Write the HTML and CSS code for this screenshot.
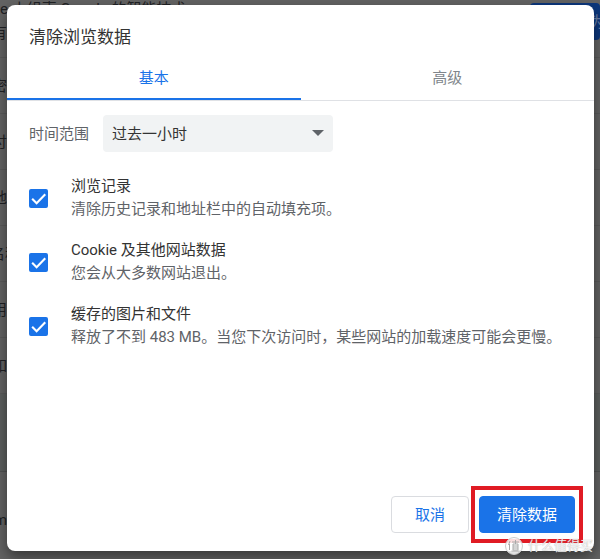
FILE: index.html
```
<!DOCTYPE html>
<html lang="zh-CN">
<head>
<meta charset="utf-8">
<title>清除浏览数据</title>
<meta name="viewport" content="width=device-width, initial-scale=1">
<link rel="stylesheet" href="styles.css">
</head>
<body>
<div class="page" aria-hidden="true">
  <div class="banner">
    <div class="banner-text">
      <p class="banner-title">e 小组声 Google 的智能技术</p>
      <p class="banner-sub">有</p>
    </div>
    <span class="banner-button">为</span>
  </div>
  <ul class="settings">
    <li>密</li>
    <li>付</li>
    <li>地</li>
    <li class="wide">名称</li>
    <li>用</li>
    <li>如</li>
  </ul>
  <div class="gap"></div>
  <p class="extra">m</p>
</div>
<div class="scrim">
  <form class="dialog" role="dialog" aria-labelledby="title">
    <h1 class="title" id="title">清除浏览数据</h1>
    <div class="tabs" role="tablist">
      <button class="tab selected" type="button" role="tab" aria-selected="true">基本</button>
      <button class="tab" type="button" role="tab" aria-selected="false">高级</button>
    </div>
    <div class="content">
      <div class="range">
        <label class="range-label" for="range">时间范围</label>
        <div class="select-wrap">
          <select class="select" id="range"><option>过去一小时</option></select>
          <svg class="arrow" viewBox="0 0 12 6" aria-hidden="true"><path d="M0 0h12L6 6z"/></svg>
        </div>
      </div>
      <label class="option">
        <span class="check"><input type="checkbox" checked><svg viewBox="0 0 18 18" aria-hidden="true"><path d="M3 9.2l4.2 4.2L15.4 5"/></svg></span>
        <span class="option-text"><span class="name">浏览记录</span><span class="desc">清除历史记录和地址栏中的自动填充项。</span></span>
      </label>
      <label class="option">
        <span class="check"><input type="checkbox" checked><svg viewBox="0 0 18 18" aria-hidden="true"><path d="M3 9.2l4.2 4.2L15.4 5"/></svg></span>
        <span class="option-text"><span class="name">Cookie 及其他网站数据</span><span class="desc">您会从大多数网站退出。</span></span>
      </label>
      <label class="option">
        <span class="check"><input type="checkbox" checked><svg viewBox="0 0 18 18" aria-hidden="true"><path d="M3 9.2l4.2 4.2L15.4 5"/></svg></span>
        <span class="option-text"><span class="name">缓存的图片和文件</span><span class="desc">释放了不到 483 MB。当您下次访问时，某些网站的加载速度可能会更慢。</span></span>
      </label>
    </div>
    <div class="actions">
      <button class="button" type="button">取消</button>
      <div class="highlight"><button class="button primary" type="submit">清除数据</button></div>
    </div>
  </form>
</div>
<div class="watermark">
  <svg viewBox="0 0 18 18" aria-hidden="true"><circle class="disc" cx="9" cy="9" r="8.5"/><path class="mark" d="M5 4L3.500 8M4.500 7v6M7 5h7M10.500 3v4M8 7h5v6H8zM8 9h5M8 11h5M6.500 14h8"/></svg>
  <span>什么值得买</span>
</div>
</body>
</html>
```
FILE: styles.css
```
* {
  box-sizing: border-box;
}

body {
  margin: 0;
  background: #636363;
  color: #333;
  font: 15px/24px Roboto, "Noto Sans CJK SC", sans-serif;
}

h1, p, ul {
  margin: 0;
  padding: 0;
}

button, select {
  font: inherit;
}

/* Settings page behind the dialog */
.page {
  position: absolute;
  inset: 0;
  overflow: hidden;
  color: #202124;
}

.banner {
  display: flex;
  justify-content: space-between;
  height: 58px;
  border-bottom: 1px solid #5a5a5a;
}

.banner-title {
  line-height: 18px;
}

.banner-sub {
  text-indent: -8px;
  line-height: 30px;
}

.banner-button {
  width: 70px;
  height: 37px;
  margin-top: 3px;
  border-radius: 4px;
  background: #0c377c;
  color: #6b7fa5;
  text-indent: 60px;
  white-space: nowrap;
  line-height: 38px;
}

.settings {
  list-style: none;
}

.settings li {
  height: 56px;
  border-bottom: 1px solid #5a5a5a;
  text-indent: -8px;
  line-height: 56px;
}

.settings .wide {
  text-indent: -10px;
}

.gap {
  height: 78px;
  border-bottom: 1px solid #505252;
  background: #5c5f5e;
}

.extra {
  text-indent: -6px;
  line-height: 96px;
}

/* Dialog */
.scrim {
  position: relative;
  display: flex;
  min-height: 100vh;
  padding: 5px 6px 8px 7px;
}

.dialog {
  display: flex;
  flex: 1;
  flex-direction: column;
  border-radius: 8px;
  background: #fff;
  box-shadow: 0 6px 14px rgba(0, 0, 0, 0.45);
}

.title {
  padding: 20px 22px 16px;
  font-size: 17px;
  font-weight: 400;
  line-height: 24px;
}

.tabs {
  display: grid;
  grid-template-columns: 1fr 1fr;
  height: 36px;
  border-bottom: 1px solid #dfe1e5;
}

.tab {
  height: 35px;
  padding: 0 0 8px;
  border: 0;
  border-bottom: 2px solid transparent;
  background: none;
  color: #80868b;
  line-height: 20px;
}

.tab.selected {
  border-color: #1a73e8;
  color: #1a73e8;
}

.content {
  flex: 1;
  padding: 14px 22px;
}

.range {
  display: flex;
  align-items: center;
  gap: 14px;
  margin-bottom: 23px;
}

.range-label {
  color: #5f6368;
}

.select-wrap {
  position: relative;
  width: 230px;
}

.select {
  width: 100%;
  height: 37px;
  padding: 0 32px 0 9px;
  border: 0;
  border-radius: 4px;
  appearance: none;
  background: #f1f3f4;
  color: #333;
}

.arrow {
  position: absolute;
  top: 15px;
  right: 9px;
  width: 12px;
  height: 6px;
  fill: #5f6368;
  pointer-events: none;
}

.option {
  display: flex;
  align-items: center;
  gap: 23px;
  margin-bottom: 18px;
}

.check {
  display: grid;
  flex: none;
  width: 19px;
  height: 19px;
}

.check input,
.check svg {
  grid-area: 1 / 1;
  width: 19px;
  height: 19px;
  margin: 0;
}

.check input {
  border: 2px solid #5f6368;
  border-radius: 2px;
  appearance: none;
}

.check input:checked {
  border-color: #1a73e8;
  background: #1a73e8;
}

.check svg {
  fill: none;
  stroke: #fff;
  stroke-width: 2;
  pointer-events: none;
}

.option-text {
  display: flex;
  flex-direction: column;
}

.name,
.desc {
  line-height: 23px;
}

.desc {
  color: #5f6368;
}

.actions {
  display: flex;
  align-items: center;
  justify-content: flex-end;
  gap: 2px;
  padding: 0 11px 8px;
}

.button {
  height: 37px;
  padding: 0 23px;
  border: 1px solid #dadce0;
  border-radius: 4px;
  background: #fff;
  color: #1a73e8;
}

.highlight {
  display: flex;
  padding: 6px 4px;
  border: 4px solid #e01b24;
}

.primary {
  padding: 0 17px;
  border-color: #1a73e8;
  background: #1a73e8;
  color: #fff;
}

/* Site mark over the bottom corner */
.watermark {
  position: absolute;
  right: 7px;
  bottom: 3px;
  display: flex;
  align-items: center;
  gap: 5px;
  color: rgba(255, 255, 255, 0.85);
  font-size: 13px;
  line-height: 20px;
  text-shadow: 0 0 1px #999;
}

.watermark svg {
  width: 18px;
  height: 18px;
}

.disc {
  fill: #fff;
  fill-opacity: 0.85;
  stroke: #ccc;
}

.mark {
  fill: none;
  stroke: #aaa;
}
```
